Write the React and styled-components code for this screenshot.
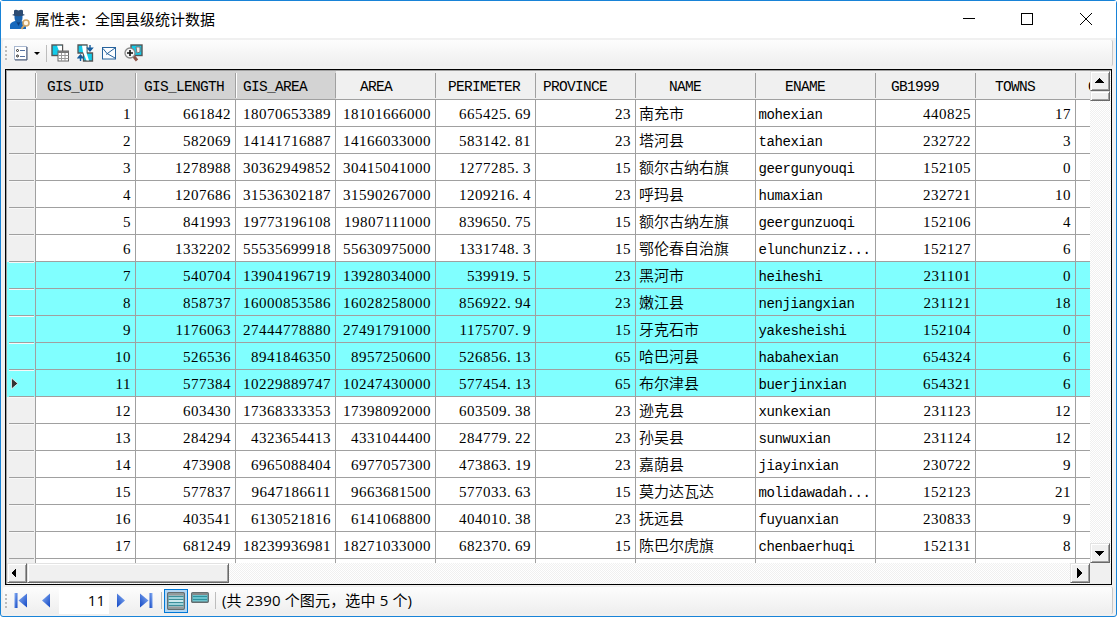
import React from "react";
import styled, { createGlobalStyle, css } from "styled-components";

const GlobalStyle = createGlobalStyle`
  * {
    box-sizing: border-box;
  }

  body {
    margin: 0;
    overflow: hidden;
    background: #fff;
  }
`;

const uiFont = `"Open Sans", "Noto Sans CJK SC", sans-serif`;
const line = "#a0a0a0";
const face = "#f0f0f0";

const Window = styled.div`
  display: flex;
  flex-direction: column;
  width: 1117px;
  height: 617px;
  border: 1px solid #1883d7;
  border-radius: 3px;
  background: ${face};
  color: #000;
  font-family: ${uiFont};
  font-size: 15px;
`;

const TitleBar = styled.header`
  display: flex;
  align-items: center;
  height: 37px;
  padding: 0 0 0 8px;
  background: #fff;

  > svg {
    flex: none;
  }
`;

const Title = styled.h1`
  flex: 1;
  margin: 0 0 2px 4px;
  font-size: 15px;
  font-weight: 400;
  line-height: 20px;
`;

const WindowButton = styled.button`
  display: flex;
  align-items: center;
  justify-content: center;
  width: ${({ $width }) => $width || 59}px;
  height: 36px;
  margin-bottom: 1px;
  padding: 0;
  border: 0;
  background: none;
`;

const Strip = styled.div`
  display: flex;
  align-items: center;
  flex: none;
  height: ${({ $height }) => $height}px;
  margin: 2px 3px 0 2px;
  padding-left: 2px;
  border-right: 1px solid #c8c8c8;
  border-radius: 2px;
  background: linear-gradient(#fdfdfd, #eeeeee);
`;

const Grip = styled.span`
  width: 2px;
  height: 14px;
  margin-right: 2px;
  background: repeating-linear-gradient(#bcbcbc 0 2px, transparent 2px 4px);
`;

const Divider = styled.span`
  width: 1px;
  height: 17px;
  margin: 0 ${({ $after }) => $after}px 0 ${({ $before }) => $before}px;
  background: #bdbdbd;
`;

const Tool = styled.button`
  display: flex;
  align-items: ${({ $top }) => ($top ? "flex-start" : "center")};
  justify-content: center;
  flex: none;
  width: ${({ $width }) => $width || 24}px;
  height: 24px;
  padding: ${({ $top }) => ($top ? "2px 0 0" : 0)};
  border: 1px solid transparent;
  background: none;

  > svg {
    flex: none;
  }

  ${({ $active }) =>
    $active &&
    css`
      border-color: #0078d7;
      background: #b3d7f3;
    `}
`;

const GridFrame = styled.main`
  display: grid;
  grid-template-columns: 1083px 21px;
  grid-template-rows: 492px 21px;
  flex: none;
  width: 1107px;
  height: 516px;
  margin: 3px 0 0 4px;
  border: 1px solid #000;
  box-shadow: inset 1px 1px 0 ${line};
  padding: 1px 0 0 1px;
`;

const TableView = styled.div`
  overflow: hidden;
  background: #fff;
`;

const Table = styled.table`
  width: 1084px;
  border-collapse: separate;
  border-spacing: 0;
  table-layout: fixed;
  line-height: 26px;

  tr {
    height: 27px;
  }

  th,
  td {
    padding: 0;
    overflow: hidden;
    white-space: pre;
  }
`;

const HeadCell = styled.th`
  height: 29px;
  border-bottom: 1px solid ${line};
  background: ${({ $marked }) => ($marked ? "#d3d3d3" : face)};
  text-align: left;
  font-family: "Liberation Mono", monospace;
  font-size: 14.5px;
  font-weight: 400;
  letter-spacing: -0.7px;
  line-height: 28px;

  span {
    display: block;
    height: 25px;
    margin: 2px 0 1px;
    padding-left: ${({ $indent }) => $indent}px;
    border-right: 1px solid ${line};
    box-shadow: ${({ $marked }) => ($marked ? "inset 1px 0 0 #fff" : "none")};
    line-height: 28px;
  }
`;

const Row = styled.tr`
  background: ${({ $selected }) => ($selected ? "#80ffff" : "#fff")};
`;

const RowHead = styled.td`
  border-right: 1px solid ${line};
  background: ${({ $selected }) => ($selected ? "#80ffff" : face)};

  > div {
    display: flex;
    align-items: center;
    height: 27px;
    margin: 0 1px 0 2px;
    padding-left: 2px;
    border-bottom: 1px solid ${line};
    border-top: 1px solid #f8f8f8;
  }
`;

const NumberCell = styled.td`
  border-right: 1px solid ${line};
  border-bottom: 1px solid ${line};
  text-align: right;
  font-family: "Liberation Serif", serif;
  font-size: 15px;
  letter-spacing: 0.5px;

  > div {
    height: 26px;
    padding: 1px 4px 0 0;
  }
`;

const Point = styled.span`
  letter-spacing: 4.25px;
`;

const NameCell = styled.td`
  border-right: 1px solid ${line};
  border-bottom: 1px solid ${line};
  font-family: "Noto Sans CJK SC", sans-serif;
  font-size: 15px;
  font-weight: 350;

  > div {
    height: 26px;
    padding-left: 3px;
  }
`;

const LatinCell = styled(NameCell)`
  font-family: "Liberation Mono", monospace;
  font-size: 14px;
  letter-spacing: -0.4px;

  > div {
    padding-top: 2px;
    padding-left: 2.5px;
  }
`;

const bevel = css`
  border: 1px solid;
  border-color: #e3e3e3 #696969 #696969 #e3e3e3;
  box-shadow: inset 1px 1px 0 #fff, inset -1px -1px 0 ${line};
  background: ${face};
`;

const Track = styled.div`
  display: flex;
  flex-direction: ${({ $vertical }) => ($vertical ? "column" : "row")};
  background: conic-gradient(#fff 25%, ${face} 0 50%, #fff 0 75%, ${face} 0) 0 0 / 2px 2px;
`;

const Corner = styled.div`
  background: ${face};
`;

const ScrollButton = styled.button`
  ${bevel}
  display: flex;
  align-items: center;
  justify-content: center;
  flex: none;
  width: 20px;
  height: 20px;
  padding: 0;
`;

const Thumb = styled.div`
  ${bevel}
  flex: none;
  width: ${({ $width }) => $width}px;
  height: ${({ $height }) => $height}px;
`;

const Spacer = styled.span`
  flex: 1;
`;

const RecordInput = styled.input`
  width: 50px;
  height: 26px;
  margin: 0 1px 0 2px;
  padding: 0 4px 2px 0;
  border: 0;
  background: #fff;
  color: #000;
  font: 15px ${uiFont};
  text-align: right;
`;

const Status = styled.span`
  padding-bottom: 2px;
  letter-spacing: 0.15px;
  line-height: 24px;
  white-space: nowrap;
`;

const columns = [
  { name: "GIS_UID", width: 100, indent: 11, marked: true },
  { name: "GIS_LENGTH", width: 100, indent: 8, marked: true },
  { name: "GIS_AREA", width: 100, indent: 7, marked: true },
  { name: "AREA", width: 100, indent: 24 },
  { name: "PERIMETER", width: 100, indent: 12 },
  { name: "PROVINCE", width: 100, indent: 7 },
  { name: "NAME", width: 120, indent: 33 },
  { name: "ENAME", width: 120, indent: 29 },
  { name: "GB1999", width: 100, indent: 15 },
  { name: "TOWNS", width: 100, indent: 19 },
  { name: "C", width: 15, indent: 12 },
];

const rows = [
  [1, "661842", "18070653389", "18101666000", "665425.69", 23, "南充市", "mohexian", 440825, 17],
  [2, "582069", "14141716887", "14166033000", "583142.81", 23, "塔河县", "tahexian", 232722, 3],
  [3, "1278988", "30362949852", "30415041000", "1277285.3", 15, "额尔古纳右旗", "geergunyouqi", 152105, 0],
  [4, "1207686", "31536302187", "31590267000", "1209216.4", 23, "呼玛县", "humaxian", 232721, 10],
  [5, "841993", "19773196108", "19807111000", "839650.75", 15, "额尔古纳左旗", "geergunzuoqi", 152106, 4],
  [6, "1332202", "55535699918", "55630975000", "1331748.3", 15, "鄂伦春自治旗", "elunchunziz...", 152127, 6],
  [7, "540704", "13904196719", "13928034000", "539919.5", 23, "黑河市", "heiheshi", 231101, 0],
  [8, "858737", "16000853586", "16028258000", "856922.94", 23, "嫩江县", "nenjiangxian", 231121, 18],
  [9, "1176063", "27444778880", "27491791000", "1175707.9", 15, "牙克石市", "yakesheishi", 152104, 0],
  [10, "526536", "8941846350", "8957250600", "526856.13", 65, "哈巴河县", "habahexian", 654324, 6],
  [11, "577384", "10229889747", "10247430000", "577454.13", 65, "布尔津县", "buerjinxian", 654321, 6],
  [12, "603430", "17368333353", "17398092000", "603509.38", 23, "逊克县", "xunkexian", 231123, 12],
  [13, "284294", "4323654413", "4331044400", "284779.22", 23, "孙吴县", "sunwuxian", 231124, 12],
  [14, "473908", "6965088404", "6977057300", "473863.19", 23, "嘉荫县", "jiayinxian", 230722, 9],
  [15, "577837", "9647186611", "9663681500", "577033.63", 15, "莫力达瓦达", "molidawadah...", 152123, 21],
  [16, "403541", "6130521816", "6141068800", "404010.38", 23, "抚远县", "fuyuanxian", 230833, 9],
  [17, "681249", "18239936981", "18271033000", "682370.69", 15, "陈巴尔虎旗", "chenbaerhuqi", 152131, 8],
];

const firstSelected = 7;
const current = 11;

const UserIcon = () => (
  <svg width="22" height="21" viewBox="0 0 22 21">
    <path d="M1 20v-4c0-2 2-3 5-4h6c3 1 5 2 5 4v4z" fill="#1769bd" />
    <path d="M7 12h5l-2.5 5z" fill="#0c3f7c" />
    <path d="M5.5 6h8v3c0 6-8 6-8 0z" fill="#1a62ad" />
    <path d="M5 1.5q1.5-1.5 4.500 0q3-1.5 4.500 0v3.500l2 1q-6.500 2.500-13 0l2-1z" fill="#2c4b72" />
    <circle cx="17" cy="14" r="3" fill="#fff6e6" stroke="#cda366" strokeWidth="1.6" />
    <path d="M15 16.5l-2.5 3.5" stroke="#cda366" strokeWidth="2" />
  </svg>
);

const ListIcon = () => (
  <svg width="14" height="15" viewBox="0 0 14 15" fill="none">
    <rect x=".5" y=".5" width="12" height="13" fill="#fff" stroke="#a9b8d0" />
    <path d="M13 1v13H1" stroke="#44536e" />
    <circle cx="3.5" cy="4.5" r="1" stroke="#222" />
    <circle cx="3.5" cy="10" r="1" stroke="#222" />
    <path d="M6 4.5h5M6 10.5h5" stroke="#5470a0" />
  </svg>
);

const MapTableIcon = () => (
  <svg width="18" height="18" viewBox="0 0 18 18">
    <rect x="1" y="1" width="10.5" height="10.5" fill="#12cbea" stroke="#555" strokeWidth="1.4" />
    <path d="M6 1.7h5v8H9z" fill="#fff" />
    <rect x="7" y="7" width="10.5" height="10" fill="#fff" stroke="#666" />
    <path d="M7 8h10.5" stroke="#777" strokeWidth="2" />
    <path d="M7.5 11.5h10M7.5 14.5h10M10.5 9v8M14 9v8" stroke="#999" />
  </svg>
);

const MapSwapIcon = () => (
  <svg width="17" height="18" viewBox="0 0 17 18">
    <path d="M1 1h9v8h5.5v8h-9V9H1z" fill="#12cbea" stroke="#555" strokeWidth="1.3" />
    <path d="M5 1.7h4.5v7l2.5 7.800H9.5L6 8z" fill="#fff" />
    <path d="M3.5 17v-4M1.2 13.8L3.5 11l2.3 2.8zM13 1v4M10.7 4.2L13 7l2.3-2.800z" fill="#155c9d" stroke="#155c9d" strokeWidth="1.4" />
  </svg>
);

const EnvelopeIcon = () => (
  <svg width="14" height="13" viewBox="0 0 14 13" fill="none" stroke="#26629c">
    <rect x=".5" y=".5" width="13" height="11.5" fill="#fbfdff" />
    <path d="M13 1L4 7.5M1 1.5l4 5 8 4.5" />
  </svg>
);

const ZoomMapIcon = () => (
  <svg width="19" height="18" viewBox="0 0 19 18">
    <rect x="7" y="1" width="11" height="10.5" fill="#12cbea" stroke="#555" strokeWidth="1.4" />
    <path d="M12 3h4v5l-3 1z" fill="#eee" stroke="#777" />
    <path d="M9.5 12l3.5 4.5" stroke="#8d5145" strokeWidth="3" />
    <circle cx="6" cy="9" r="5" fill="#f5f5f5" stroke="#888" strokeWidth="1.3" />
    <path d="M3 9h6M6 6v6" stroke="#111" strokeWidth="1.6" />
  </svg>
);

const NavIcon = ({ flip, bar }) => (
  <svg width="14" height="16" viewBox="0 0 14 16">
    <defs>
      <linearGradient id="navBlue" x2="1" y2="1">
        <stop offset="0" stopColor="#8bb2f5" />
        <stop offset="1" stopColor="#1247c4" />
      </linearGradient>
    </defs>
    <g transform={flip ? "translate(14 0) scale(-1 1)" : undefined} fill="url(#navBlue)">
      {bar && <rect x=".5" y="0" width="3" height="15" />}
      <path d={bar ? "M13 .5v14L4.500 7.500z" : "M12 .5v14L4 7.500z"} />
    </g>
  </svg>
);

const RecordsIcon = () => (
  <svg width="18" height="18" viewBox="0 0 18 18">
    <rect x=".7" y=".7" width="16.6" height="16.6" rx="1" fill="#9fd3da" stroke="#666e70" strokeWidth="1.4" />
    <path d="M1.5 2.5h15M1.5 15.5h15" stroke="#999" strokeWidth="2" />
    <path d="M1.5 4.5h15M1.5 7.5h15M1.5 10.5h15M1.5 13.5h15" stroke="#3c8f9a" />
    <path d="M2 9h14" stroke="#fff" />
  </svg>
);

const SelectedRecordsIcon = () => (
  <svg width="18" height="11" viewBox="0 0 18 11">
    <rect x=".7" y=".7" width="16.6" height="9.6" rx="1" fill="#6cc3cd" stroke="#666e70" strokeWidth="1.4" />
    <path d="M1.5 2h15" stroke="#888" strokeWidth="2" />
    <path d="M2 4.5h14M2 7.5h14" stroke="#2e929e" />
  </svg>
);

const arrowPaths = {
  up: "M0 8l5-5 5 5z",
  down: "M0 4l5 5 5-5z",
  left: "M5 1v10L0 6z",
  right: "M3 1v10l5-5z",
};

const Arrow = ({ dir }) => (
  <svg width="12" height="12" viewBox="0 0 12 12" shapeRendering="crispEdges">
    <path d={arrowPaths[dir]} />
  </svg>
);

const Numeric = ({ value }) => {
  const [whole, fraction] = String(value).split(".");

  return (
    <NumberCell>
      <div>
        {whole}
        {fraction && <Point>.</Point>}
        {fraction}
      </div>
    </NumberCell>
  );
};

const DataTable = () => (
  <Table>
    <colgroup>
      <col style={{ width: 29 }} />
      {columns.map(({ name, width }) => (
        <col key={name} style={{ width }} />
      ))}
    </colgroup>
    <thead>
      <tr>
        <HeadCell>
          <span />
        </HeadCell>
        {columns.map(({ name, indent, marked }) => (
          <HeadCell key={name} $indent={indent} $marked={marked}>
            <span>{name}</span>
          </HeadCell>
        ))}
      </tr>
    </thead>
    <tbody>
      {rows.map((row) => {
        const selected = row[0] >= firstSelected && row[0] <= current;

        return (
          <Row key={row[0]} $selected={selected}>
            <RowHead $selected={selected}>
              <div>
                {row[0] === current && (
                  <svg width="8" height="13" viewBox="0 0 8 13">
                    <path d="M.5 1v11l6.300-5.500z" fill="#333" stroke="#e8f4f4" strokeWidth=".8" />
                  </svg>
                )}
              </div>
            </RowHead>
            {row.slice(0, 6).map((value, i) => (
              <Numeric key={i} value={value} />
            ))}
            <NameCell>
              <div>{row[6]}</div>
            </NameCell>
            <LatinCell>
              <div>{row[7]}</div>
            </LatinCell>
            <Numeric value={row[8]} />
            <Numeric value={row[9]} />
            <NumberCell />
          </Row>
        );
      })}
      <Row>
        <RowHead />
        {columns.map(({ name }) => (
          <NumberCell key={name} />
        ))}
      </Row>
    </tbody>
  </Table>
);

const App = () => (
  <>
    <GlobalStyle />
    <Window>
      <TitleBar>
        <UserIcon />
        <Title>属性表：全国县级统计数据</Title>
        <WindowButton $width={57}>
          <svg width="12" height="12" stroke="#000">
            <path d="M0 5.5h12" />
          </svg>
        </WindowButton>
        <WindowButton>
          <svg width="12" height="12" stroke="#000" fill="none">
            <rect x=".5" y=".5" width="11" height="11" />
          </svg>
        </WindowButton>
        <WindowButton $width={60}>
          <svg width="12" height="12" stroke="#000">
            <path d="M0 0l12 12M12 0L0 12" />
          </svg>
        </WindowButton>
      </TitleBar>
      <Strip $height={26}>
        <Grip />
        <Tool>
          <ListIcon />
        </Tool>
        <Tool $width={8}>
          <svg width="6" height="3">
            <path d="M0 0h6L3 3z" />
          </svg>
        </Tool>
        <Divider $before={5} $after={0} />
        <Tool $width={26}>
          <MapTableIcon />
        </Tool>
        <Tool>
          <MapSwapIcon />
        </Tool>
        <Tool>
          <EnvelopeIcon />
        </Tool>
        <Tool>
          <ZoomMapIcon />
        </Tool>
      </Strip>
      <GridFrame>
        <TableView>
          <DataTable />
        </TableView>
        <Track $vertical>
          <ScrollButton>
            <Arrow dir="up" />
          </ScrollButton>
          <Thumb $width={20} $height={10} />
          <Spacer />
          <ScrollButton>
            <Arrow dir="down" />
          </ScrollButton>
        </Track>
        <Track>
          <ScrollButton>
            <Arrow dir="left" />
          </ScrollButton>
          <Thumb $width={202} $height={20} />
          <Spacer />
          <ScrollButton>
            <Arrow dir="right" />
          </ScrollButton>
        </Track>
        <Corner />
      </GridFrame>
      <Strip $height={27}>
        <Grip />
        <Tool>
          <NavIcon bar />
        </Tool>
        <Tool>
          <NavIcon />
        </Tool>
        <RecordInput defaultValue={current} />
        <Tool>
          <NavIcon flip />
        </Tool>
        <Tool>
          <NavIcon flip bar />
        </Tool>
        <Divider $before={3} $after={2} />
        <Tool $active>
          <RecordsIcon />
        </Tool>
        <Tool $top>
          <SelectedRecordsIcon />
        </Tool>
        <Divider $before={3} $after={6} />
        <Status>(共 2390 个图元，选中 5 个)</Status>
      </Strip>
    </Window>
  </>
);

export default App;
